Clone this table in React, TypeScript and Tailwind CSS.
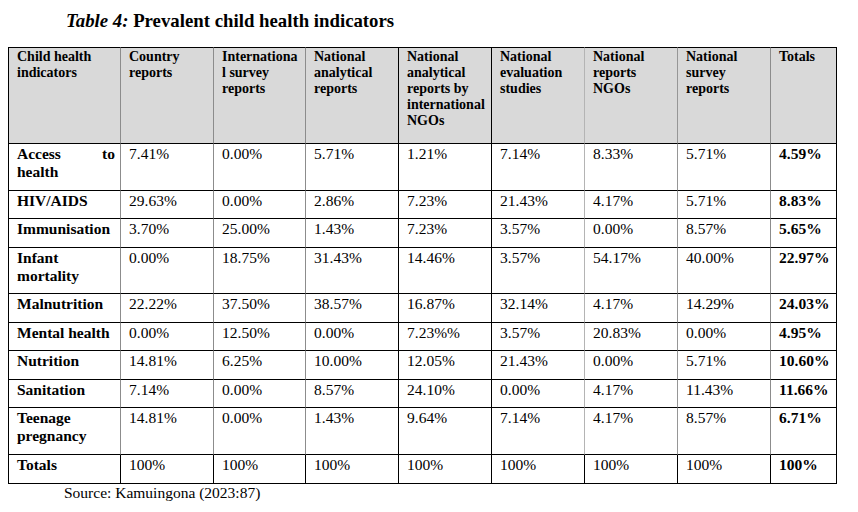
import React from "react";

type Row = {
    label: string[];
    justify?: boolean;
    values: string[];
    total: string;
    height: string;
};

const headers: string[][] = [
    ["Child health", "indicators"],
    ["Country", "reports"],
    ["Internationa", "l survey", "reports"],
    ["National", "analytical", "reports"],
    ["National", "analytical", "reports by", "international", "NGOs"],
    ["National", "evaluation", "studies"],
    ["National", "reports", "NGOs"],
    ["National", "survey", "reports"],
    ["Totals"],
];

const rows: Row[] = [
    { label: ["Access", "to", "health"], justify: true, values: ["7.41%", "0.00%", "5.71%", "1.21%", "7.14%", "8.33%", "5.71%"], total: "4.59%", height: "h-[47px]" },
    { label: ["HIV/AIDS"], values: ["29.63%", "0.00%", "2.86%", "7.23%", "21.43%", "4.17%", "5.71%"], total: "8.83%", height: "h-[28px]" },
    { label: ["Immunisation"], values: ["3.70%", "25.00%", "1.43%", "7.23%", "3.57%", "0.00%", "8.57%"], total: "5.65%", height: "h-[29px]" },
    { label: ["Infant", "mortality"], values: ["0.00%", "18.75%", "31.43%", "14.46%", "3.57%", "54.17%", "40.00%"], total: "22.97%", height: "h-[46px]" },
    { label: ["Malnutrition"], values: ["22.22%", "37.50%", "38.57%", "16.87%", "32.14%", "4.17%", "14.29%"], total: "24.03%", height: "h-[29px]" },
    { label: ["Mental health"], values: ["0.00%", "12.50%", "0.00%", "7.23%%", "3.57%", "20.83%", "0.00%"], total: "4.95%", height: "h-[28px]" },
    { label: ["Nutrition"], values: ["14.81%", "6.25%", "10.00%", "12.05%", "21.43%", "0.00%", "5.71%"], total: "10.60%", height: "h-[29px]" },
    { label: ["Sanitation"], values: ["7.14%", "0.00%", "8.57%", "24.10%", "0.00%", "4.17%", "11.43%"], total: "11.66%", height: "h-[28px]" },
    { label: ["Teenage", "pregnancy"], values: ["14.81%", "0.00%", "1.43%", "9.64%", "7.14%", "4.17%", "8.57%"], total: "6.71%", height: "h-[47px]" },
];

const widths = ["w-[113px]", "w-[93px]", "w-[92px]", "w-[93px]", "w-[93px]", "w-[93px]", "w-[93px]", "w-[93px]", "w-[66px]"];

// colour of each column's right rule, as printed in the source PDF
const rules = [
    "border-r-[#8c8c8c]",
    "border-r-[#8c8c8c]",
    "border-r-[#8c8c8c]",
    "border-r-black",
    "border-r-black",
    "border-r-[#b4b4b4]",
    "border-r-[#969696]",
    "border-r-[#8c8c8c]",
    "border-r-black",
];

const cellBase = "border-r border-b border-b-black align-top pl-[8px] pr-[5px]";

function cellClass(index: number, rule: string) {
    return `${cellBase} ${rule} ${index === 0 ? "border-l border-l-black" : ""}`;
}

export default function App() {
    return (
        <div className="h-[512px] w-[858px] overflow-hidden bg-white text-black font-['Liberation_Serif','Times_New_Roman',serif]">
            <h1 className="pl-[66px] pt-[10px] text-[18.8px] leading-[22px] font-bold">
                <i>Table 4:</i> Prevalent child health indicators
            </h1>

            <table className="mt-[15px] ml-[8px] w-[829px] table-fixed border-separate border-spacing-0">
                <thead>
                    <tr className="h-[97px] bg-[#d9d9d9]">
                        {headers.map((lines, i) => (
                            <th
                                key={i}
                                className={`${cellClass(i, rules[i])} ${widths[i]} border-t border-t-black pt-[1px] text-left text-[14px] leading-[16px] font-bold`}
                            >
                                {lines.map((line, j) => (
                                    <div key={j}>{line}</div>
                                ))}
                            </th>
                        ))}
                    </tr>
                </thead>
                <tbody className="text-[15.5px] leading-[17.5px]">
                    {rows.map((row) => (
                        <tr key={row.label.join(" ")} className={row.height}>
                            <td className={`${cellClass(0, rules[0])} pt-[1px] font-bold`}>
                                {row.justify ? (
                                    <>
                                        <div className="flex justify-between">
                                            <span>{row.label[0]}</span>
                                            <span>{row.label[1]}</span>
                                        </div>
                                        <div>{row.label[2]}</div>
                                    </>
                                ) : (
                                    row.label.map((line, j) => <div key={j}>{line}</div>)
                                )}
                            </td>
                            {row.values.map((value, i) => (
                                <td key={i} className={`${cellClass(i + 1, rules[i + 1])} pt-[1px]`}>
                                    {value}
                                </td>
                            ))}
                            <td className={`${cellClass(8, rules[8])} pt-[1px] font-bold`}>{row.total}</td>
                        </tr>
                    ))}
                    <tr className="h-[29px]">
                        <td className={`${cellClass(0, "border-r-black")} pt-[1px] font-bold`}>Totals</td>
                        {Array.from({ length: 7 }).map((_, i) => (
                            <td key={i} className={`${cellClass(i + 1, "border-r-black")} pt-[1px]`}>
                                100%
                            </td>
                        ))}
                        <td className={`${cellClass(8, "border-r-black")} pt-[1px] font-bold`}>100%</td>
                    </tr>
                </tbody>
            </table>

            <p className="pl-[64px] text-[15.5px] leading-[17.5px]">Source: Kamuingona (2023:87)</p>
        </div>
    );
}
